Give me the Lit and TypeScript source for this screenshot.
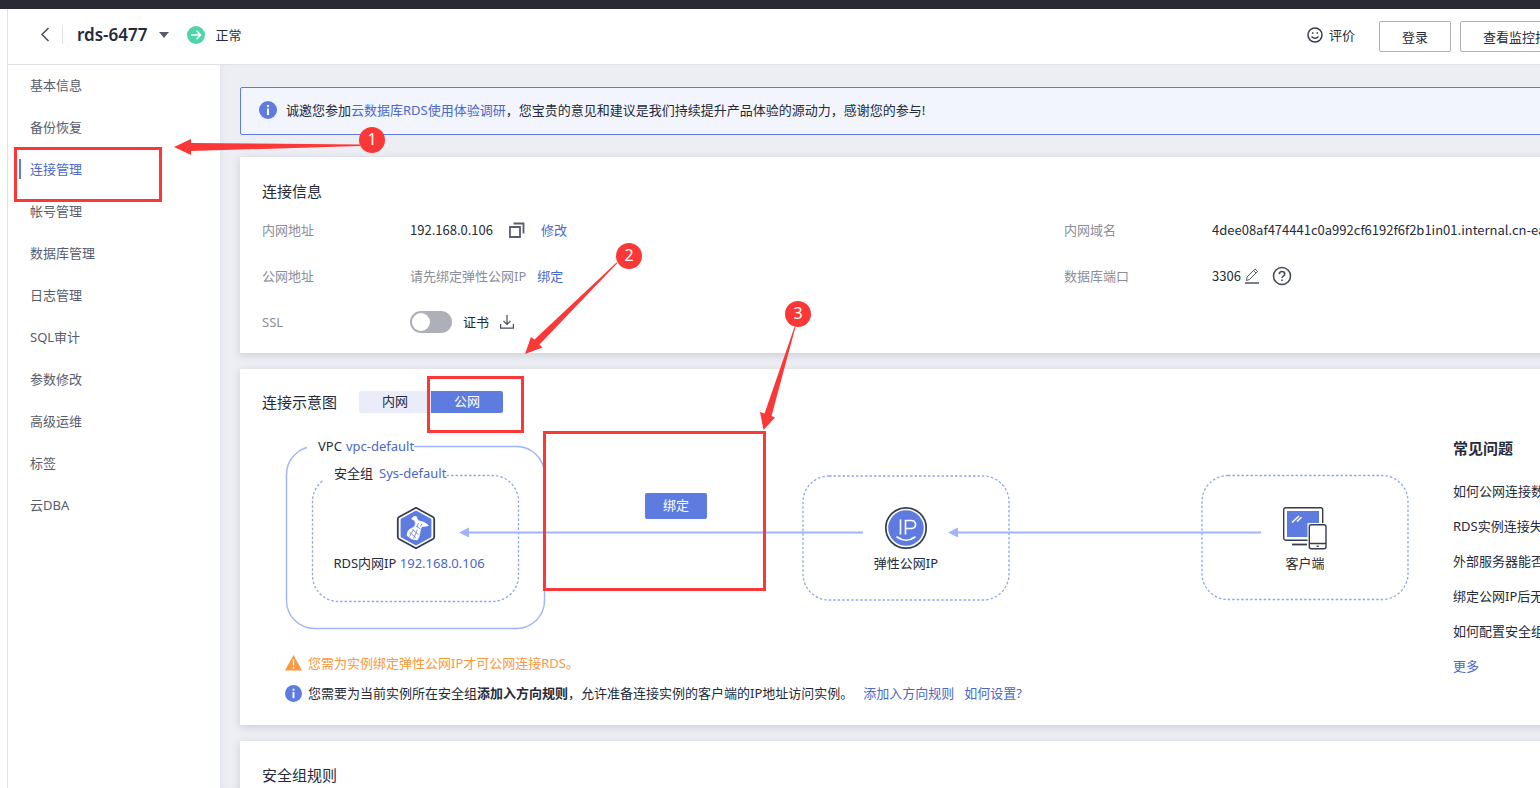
import { LitElement, html, svg, css } from "lit";
import { customElement, state } from "lit/decorators.js";

const NAV = ["基本信息", "备份恢复", "连接管理", "帐号管理", "数据库管理", "日志管理", "SQL审计", "参数修改", "高级运维", "标签", "云DBA"];
const FAQ = ["如何公网连接数据库", "RDS实例连接失败", "外部服务器能否", "绑定公网IP后无法", "如何配置安全组"];

@customElement("app-root")
export class AppRoot extends LitElement {
  @state() private active = 2;
  @state() private net = 1;

  static styles = css`
    :host {
      display: block;
      position: relative;
      height: 100vh;
      overflow: hidden;
      background: #fff;
      color: #252b3a;
      font: 13px/20px "Noto Sans", "Noto Sans CJK SC", sans-serif;
      --blue: #5e7ce0;
      --link: #4a68c8;
      --line: #9fb4fa;
    }
    * { box-sizing: border-box; }
    a { color: var(--link); text-decoration: none; }
    button { font: inherit; color: inherit; cursor: pointer; padding: 0; border: 0; background: none; }
    svg { display: block; flex: none; }
    h1, h2, h3, ul, p, dl, dd, dt { margin: 0; padding: 0; font-weight: 400; }
    ul { list-style: none; }
    .page { min-width: 1908px; height: 100%; display: flex; flex-direction: column; }
    .topbar { height: 9px; background: #282b33; flex: none; }
    .shell { flex: 1; min-height: 0; margin-left: 7px; border-left: 1px solid #dfe1e6; display: flex; flex-direction: column; }
    .header { flex: none; height: 56px; border-bottom: 1px solid #dfe1e6; display: flex; align-items: center; padding: 0 324px 0 32px; }
    .ident { display: flex; align-items: center; padding-bottom: 3px; }
    .back { padding-right: 12px; border-right: 1px solid #dfe1e6; height: 18px; margin-right: 14px; display: flex; align-items: center; }
    .name { font-size: 17px; font-weight: 600; line-height: 24px; }
    .caret { margin: 0 18px 0 12px; }
    .state { margin-left: 10px; }
    .actions { margin-left: auto; display: flex; align-items: center; gap: 9px; }
    .rate { display: flex; align-items: center; gap: 6px; margin-right: 15px; padding-bottom: 3px; }
    .btn { height: 31px; padding: 0 22px; border: 1px solid #adb0b8; border-radius: 2px; }
    .body { flex: 1; min-height: 0; display: flex; }
    .side { width: 212px; flex: none; }
    .side a { display: flex; align-items: center; height: 40px; margin-bottom: 2px; padding-left: 9px; margin-left: 11px; color: #575d6c; }
    .side a::before { content: ""; width: 2px; height: 20px; margin-left: -9px; margin-right: 9px; }
    .side a.on { color: var(--link); }
    .side a.on::before { background: var(--blue); }
    .main { flex: 1; min-width: 0; background: #eceef4; padding: 22px 20px 0; display: flex; flex-direction: column; gap: 16px; box-shadow: inset 4px 0 6px -4px #dcdee5; }
    .notice { height: 48px; flex: none; margin-bottom: 6px; border: 1px solid var(--blue); border-radius: 2px; background: #f2f5fd; display: flex; align-items: center; padding: 0 18px 2px; gap: 9px; }
    .card { flex: none; background: #fff; padding: 22px 22px 8px; box-shadow: 0 2px 8px rgba(40, 45, 60, 0.16); }
    .title { font-size: 15px; line-height: 24px; }
    .info { display: grid; grid-template-columns: 1fr 1fr; grid-auto-rows: 46px; align-items: center; margin-top: 4px; }
    .field { display: grid; grid-template-columns: 148px 1fr; align-items: center; }
    .field dt, .muted { color: #8a8e99; }
    .field dd { display: flex; align-items: center; }
    .value { font-family: "Noto Sans CJK SC", sans-serif; }
    .g16 { gap: 16px; }
    .g11 { gap: 11px; }
    .g4 { gap: 4px; }
    .ml { margin-left: 9px; }
    .switch { appearance: none; margin: 0; width: 42px; height: 22px; border-radius: 11px; background: #adb0b8; padding: 2px; display: flex; cursor: pointer; }
    .switch::before { content: ""; width: 18px; height: 18px; border-radius: 50%; background: #fff; }
    .switch:checked { background: var(--blue); justify-content: flex-end; }
    .titlebar { display: flex; align-items: center; gap: 22px; height: 22px; }
    .tabs { display: flex; border-radius: 2px; overflow: hidden; }
    .tabs button { width: 72px; height: 22px; line-height: 20px; background: #e9edfa; padding-bottom: 2px; }
    .tabs button.on { background: var(--blue); color: #fff; }
    .split { display: grid; grid-template-columns: 1191px 1fr; padding-top: 22px; }
    .diagram { position: relative; height: 213px; }
    .lines { position: absolute; inset: 0; }
    .tag { position: absolute; background: #fff; padding-left: 11px; display: flex; gap: 4px; white-space: nowrap; }
    .vpc { left: 45px; top: 1px; }
    .sec { left: 61px; top: 28px; gap: 6px; }
    .node { position: absolute; top: 71px; width: 206px; display: flex; flex-direction: column; align-items: center; gap: 3px; }
    .rds { left: 51px; }
    .rds span { margin-right: 14px; }
    .eip { left: 541px; }
    .client { left: 940px; }
    .bind { position: absolute; left: 383px; top: 58px; width: 62px; height: 26px; padding-bottom: 2px; border-radius: 2px; background: var(--blue); color: #fff; }
    .hint { display: flex; align-items: center; height: 30px; padding-left: 23px; gap: 6px; }
    .hint a { margin-left: 4px; }
    .warn { color: #fa9841; }
    .last { padding-bottom: 17px; }
    .faq h3 { font-size: 15px; line-height: 26px; font-weight: 600; margin-bottom: 13px; }
    .faq li { line-height: 35px; }
    .faq li a { color: #252b3a; }
    .faq li:last-child a { color: var(--link); }
    .grow { flex: 1; }
    .marks { position: absolute; left: 0; top: 0; pointer-events: none; }
    .marks text { font-size: 16px; fill: #fff; text-anchor: middle; }
  `;

  private lines() {
    return html`<svg class="lines" width="1160" height="213" fill="none" stroke="#9fb4fa">
      <rect x="24.5" y="11.5" width="258" height="182" rx="28" stroke-width="1.4" />
      <g stroke="#8fa6f0" stroke-dasharray="2.5 2" stroke-width="1.3">
        <rect x="50.5" y="40.5" width="206" height="126" rx="26" />
        <rect x="541" y="41" width="206" height="124" rx="26" />
        <rect x="940" y="40.5" width="206" height="124" rx="26" />
      </g>
      <path d="M205 97.5H601M694 97.5H999" stroke-width="2" />
      <path d="M197 97.5l10-5v10zM686 97.5l10-5v10z" fill="#9fb4fa" stroke="none" />
    </svg>`;
  }

  private rdsIcon() {
    return html`<svg width="44" height="44" viewBox="0 0 44 44">
      <path d="M22 1.800 39 11q1.200 .7 1.200 2v18q0 1.300-1.200 2L22 42.200 5 33q-1.200-.7-1.200-2V13q0-1.300 1.200-2z" fill="#fff" stroke="#373d50" stroke-width="1.800" />
      <path d="M22 4.600 36.600 12.400q.8.500.8 1.400v16.400q0 .9-.8 1.400L22 39.400 7.400 31.600q-.8-.5-.8-1.400V13.800q0-.9.8-1.400z" fill="#5e7ce0" />
      <path d="M17.500 13q1.200-2.700 3.800-2.700 1.700 0 1.700 2 .5 1.800 2 2.700 6 .8 9.500 4.500-3.500 1.200-6.500 1-1.800 2.300-2 6-.5 5.500-3 7.500-5.500 0-10-4.500 0-4.500 3-6.500 4.500-1.500 5.200-4 .5-3.200-.7-4.500z" fill="#fff" stroke="#fff" stroke-width=".6" stroke-linejoin="round" />
      <path d="M15.500 26l6.500 6M18.500 23.500l6 5M15.500 30.500l4-7M19.500 32.500l4-9M22 20l4.500 3M24.500 17l-1.500 4M28 17.500l-1.500 3" stroke="#5e7ce0" stroke-width=".8" fill="none" />
    </svg>`;
  }

  private eipIcon() {
    return html`<svg width="44" height="44" viewBox="0 0 44 44" fill="none">
      <circle cx="22" cy="22" r="20.200" fill="#fff" stroke="#373d50" stroke-width="1.700" />
      <circle cx="22" cy="22" r="17.800" fill="#5e7ce0" />
      <path d="M16.500 14v14M21.500 28V14.500h5.500q4.500 0 4.500 4t-4.500 4h-5.500M13 31q9 6.500 18 0" stroke="#fff" stroke-width="1.600" stroke-linecap="round" />
    </svg>`;
  }

  private clientIcon() {
    return html`<svg width="44" height="44" viewBox="0 0 44 44" fill="none" stroke="#373d50" stroke-width="1.400">
      <rect x=".7" y="1.700" width="39" height="32.500" rx="2" fill="#fff" />
      <path d="M4 5h32v14h-7q-3 0-3 3v9H4z" fill="#5e7ce0" stroke="none" />
      <path d="M9 16.500l7-6.500M14 15.500l4.500-4.200" stroke="#fff" stroke-width="1.500" />
      <path d="M9 38.500h15" stroke-width="1.800" />
      <rect x="24.500" y="17" width="19.500" height="27" fill="#fff" stroke="none" />
      <rect x="26.300" y="18.700" width="16.700" height="24" rx="2" fill="#fff" />
      <path d="M26 37.500h17M33.700 40.200h2" />
    </svg>`;
  }

  private info(size: number) {
    return html`<svg width=${size} height=${size} viewBox="0 0 18 18"><circle cx="9" cy="9" r="9" fill="#5e7ce0" /><rect x="8" y="4" width="2" height="2" fill="#fff" /><rect x="8" y="7.500" width="2" height="6.500" fill="#fff" /></svg>`;
  }

  private marks() {
    const spots = [[372, 140], [629, 256], [798, 314]];
    return html`<svg class="marks" width="820" height="600" fill="#fb3838" aria-hidden="true">
      <g fill="none" stroke="#fb3838" stroke-width="3">
        <rect x="15.500" y="148.500" width="145" height="52" />
        <rect x="428.500" y="377.500" width="94" height="54" />
        <rect x="544.500" y="432.500" width="220" height="157" />
      </g>
      <path d="M174 147 191 139V143L360 144.500V146L191 151V155z" />
      <path d="M525 354 531 337 534.500 339.500 616.500 262.500 617.500 263 539.500 344.500 542.500 347.500z" />
      <path d="M763.500 430 760 412 764.500 413.500 794.500 327H795.500L771.500 416 775 417.500z" />
      ${spots.map(([x, y], i) => svg`<circle cx=${x} cy=${y} r="13" /><text x=${x} y=${y + 5}>${i + 1}</text>`)}
    </svg>`;
  }

  render() {
    return html`
      <div class="page">
        <div class="topbar"></div>
        <div class="shell">
          <header class="header">
            <div class="ident">
              <button class="back" aria-label="返回"><svg width="10" height="16" viewBox="0 0 10 16" fill="none" stroke="#464c59" stroke-width="1.500"><path d="M8.500 1 2 7.500 8.500 14" /></svg></button>
              <h1 class="name">rds-6477</h1>
              <svg class="caret" width="10" height="6"><path d="M0 0h10L5 6z" fill="#575d6c" /></svg>
              <svg width="18" height="18" fill="none" stroke="#fff" stroke-width="1.500"><circle cx="9" cy="9" r="9" fill="#50d4ab" stroke="none" /><path d="M4 9h9.500M9.500 4.800 13.700 9l-4.200 4.200" /></svg>
              <span class="state">正常</span>
            </div>
            <div class="actions">
              <button class="rate"><svg width="16" height="16" fill="none" stroke="#373d50" stroke-width="1.500"><circle cx="8" cy="8" r="7" /><path d="M4.500 9.500q3.500 3.500 7 0" /><path d="M5 6h1.500M9.500 6H11" /></svg>评价</button>
              <button class="btn">登录</button>
              <button class="btn">查看监控指标</button>
            </div>
          </header>
          <div class="body">
            <nav class="side">
              ${NAV.map((t, i) => html`<a href="#" class=${i === this.active ? "on" : ""} @click=${() => (this.active = i)}>${t}</a>`)}
            </nav>
            <main class="main">
              <div class="notice">${this.info(18)}<p>诚邀您参加<a href="#">云数据库RDS使用体验调研</a>，您宝贵的意见和建议是我们持续提升产品体验的源动力，感谢您的参与!</p></div>

              <section class="card">
                <h2 class="title">连接信息</h2>
                <dl class="info">
                  <div class="field"><dt>内网地址</dt><dd class="g16"><span class="value">192.168.0.106</span><svg width="16" height="16" fill="none" stroke="#575d6c" stroke-width="1.800"><path d="M1 5h10v10H1zM4.500 1.500h10v10" /></svg><a href="#">修改</a></dd></div>
                  <div class="field"><dt>内网域名</dt><dd class="value">4dee08af474441c0a992cf6192f6f2b1in01.internal.cn-ea</dd></div>
                  <div class="field"><dt>公网地址</dt><dd class="g11"><span class="muted">请先绑定弹性公网IP</span><a href="#">绑定</a></dd></div>
                  <div class="field"><dt>数据库端口</dt><dd class="g4"><span class="value">3306</span><svg width="14" height="16" fill="none" stroke="#575d6c"><path d="M1.500 12.500 2 9 10 1l2.500 2.500-8 8zM8.500 2.500 11 5" /><path d="M0 15h14" stroke-width="1.600" /></svg><svg class="ml" width="20" height="20" fill="none" stroke="#464c59" stroke-width="1.600"><circle cx="10" cy="10" r="8.500" /><path d="M7.300 8.200q0-2.700 2.700-2.700t2.700 2.400q0 1.500-1.400 2.200-1.300.7-1.300 2M10 13.500v1.600" /></svg></dd></div>
                  <div class="field"><dt><label for="ssl">SSL</label></dt><dd class="g11"><input id="ssl" class="switch" type="checkbox" role="switch" /><span>证书</span><svg width="14" height="14" fill="none" stroke="#464c59" stroke-width="1.200"><path d="M7 0v9M3.500 6 7 9.500 10.500 6M.6 9v4.200h12.800V9" /></svg></dd></div>
                </dl>
              </section>

              <section class="card last">
                <div class="titlebar">
                  <h2 class="title">连接示意图</h2>
                  <div class="tabs">
                    ${["内网", "公网"].map((t, i) => html`<button class=${i === this.net ? "on" : ""} @click=${() => (this.net = i)}>${t}</button>`)}
                  </div>
                </div>
                <div class="split">
                  <div>
                    <div class="diagram">
                      ${this.lines()}
                      <div class="tag vpc"><span>VPC</span><a href="#">vpc-default</a></div>
                      <div class="tag sec"><span>安全组</span><a href="#">Sys-default</a></div>
                      <div class="node rds">${this.rdsIcon()}<span>RDS内网IP <a href="#">192.168.0.106</a></span></div>
                      <button class="bind">绑定</button>
                      <div class="node eip">${this.eipIcon()}<span>弹性公网IP</span></div>
                      <div class="node client">${this.clientIcon()}<span>客户端</span></div>
                    </div>
                    <p class="hint warn"><svg width="17" height="16"><path d="M8.500 0 17 15.500H0z" fill="#fa9841" /><path d="M8.500 4.500V10.500M8.500 12v1.500" stroke="#fff" stroke-width="1.400" /></svg>您需为实例绑定弹性公网IP才可公网连接RDS。</p>
                    <p class="hint">${this.info(17)}<span>您需要为当前实例所在安全组<b>添加入方向规则</b>，允许准备连接实例的客户端的IP地址访问实例。</span><a href="#">添加入方向规则</a><a href="#">如何设置?</a></p>
                  </div>
                  <aside class="faq">
                    <h3>常见问题</h3>
                    <ul>${FAQ.map((t) => html`<li><a href="#">${t}</a></li>`)}<li><a href="#">更多</a></li></ul>
                  </aside>
                </div>
              </section>

              <section class="card grow"><h2 class="title">安全组规则</h2></section>
            </main>
          </div>
        </div>
      </div>
      ${this.marks()}
    `;
  }
}
